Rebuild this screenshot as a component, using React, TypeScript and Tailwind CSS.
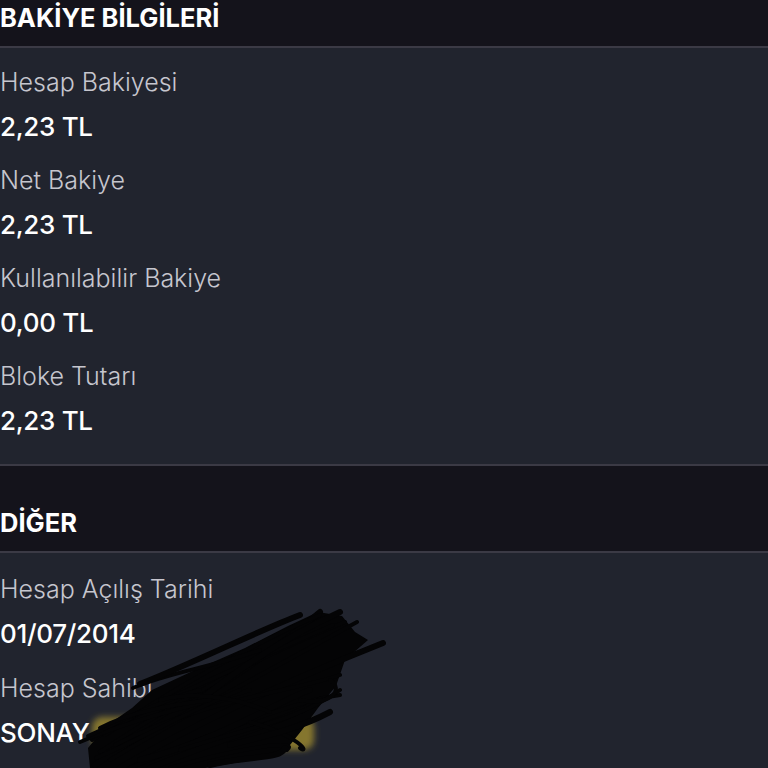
import React from "react";

const font = { fontFamily: "Inter, 'Noto Sans', sans-serif" };

function Header({ title, top }: { title: string; top: boolean }) {
  return (
    <div
      className={`bg-[#14131b] border-b-2 border-[#3b3a45] pb-[10px] ${top ? "pt-0" : "pt-[39px]"}`}
    >
      <div className="text-[25.5px] leading-[36px] font-bold text-white">{title}</div>
    </div>
  );
}

function Item({ label, value }: { label: string; value: React.ReactNode }) {
  return (
    <div className="flex flex-col gap-[11px]">
      <div className="text-[25px] leading-[32px] font-light text-[#c6c6ce]">{label}</div>
      <div className="text-[26px] leading-[36px] font-medium tracking-[-0.3px] text-white">{value}</div>
    </div>
  );
}

function Scribble() {
  const strokes = [
    "M95 765 C160 720 240 680 320 612",
    "M100 752 C170 705 250 660 345 622",
    "M110 760 C190 712 270 670 357 622",
    "M120 768 C200 720 290 680 383 643",
    "M92 740 C150 705 220 675 333 625",
    "M130 768 C220 730 300 700 340 695",
    "M150 768 C230 735 290 720 320 700",
    "M170 768 C250 745 300 740 287 750",
    "M105 735 C170 690 260 640 320 615",
    "M200 700 C250 660 300 630 340 612",
    "M80 742 C150 712 220 700 250 690",
    "M115 745 C200 700 300 690 340 675",
    "M140 760 C220 740 280 700 310 690",
    "M180 750 C240 730 300 720 340 690",
    "M96 758 C140 740 190 710 240 690",
    "M210 765 C250 755 280 760 285 748",
    "M250 722 C300 735 310 755 300 748",
    "M133 688 C170 672 210 668 260 650",
    "M140 684 C200 660 260 630 300 615",
    "M88 736 C120 722 160 700 200 690",
    "M300 700 C330 706 345 690 330 680",
    "M230 745 C270 735 300 728 330 712",
    "M160 700 C200 690 240 700 270 712",
    "M100 728 C130 712 170 705 210 700",
  ];
  return (
    <svg
      className="absolute left-0 top-0 pointer-events-none"
      width="768"
      height="768"
      viewBox="0 0 768 768"
    >
      <defs>
        <filter id="glow" x="-20%" y="-50%" width="140%" height="200%">
          <feGaussianBlur stdDeviation="3" />
        </filter>
      </defs>
      <rect x="92" y="717" width="222" height="33" rx="10" fill="#85762f" filter="url(#glow)" />
      <path
        d="M90 768 L88 748 L106 726 L132 708 L152 690 L195 670 L245 648 L288 626 L318 612 L342 616 L355 632 L368 640 L345 660 L336 686 L318 708 L302 730 L286 750 L240 762 L205 768 Z"
        fill="#040405"
      />
      {strokes.map((d, i) => (
        <path
          key={i}
          d={d}
          fill="none"
          stroke="#040405"
          strokeWidth={i % 3 === 0 ? 6 : 4}
          strokeLinecap="round"
        />
      ))}
    </svg>
  );
}

export default function App() {
  return (
    <div className="relative w-[768px] h-[768px] overflow-hidden bg-[#21242e]" style={font}>
      <Header title="BAKİYE BİLGİLERİ" top />
      <div className="bg-[#21242e] border-b-2 border-[#3b3a45] pt-[18px] pb-[25px] flex flex-col gap-[19px]">
        <Item label="Hesap Bakiyesi" value="2,23 TL" />
        <Item label="Net Bakiye" value="2,23 TL" />
        <Item label="Kullanılabilir Bakiye" value="0,00 TL" />
        <Item label="Bloke Tutarı" value="2,23 TL" />
      </div>
      <Header title="DİĞER" top={false} />
      <div className="bg-[#21242e] pt-[20px] flex flex-col gap-[20px]">
        <Item label="Hesap Açılış Tarihi" value="01/07/2014" />
        <Item label="Hesap Sahibi" value={<span>SONAY <span className="text-[#e3c84a]">A</span></span>} />
      </div>
      <Scribble />
    </div>
  );
}
